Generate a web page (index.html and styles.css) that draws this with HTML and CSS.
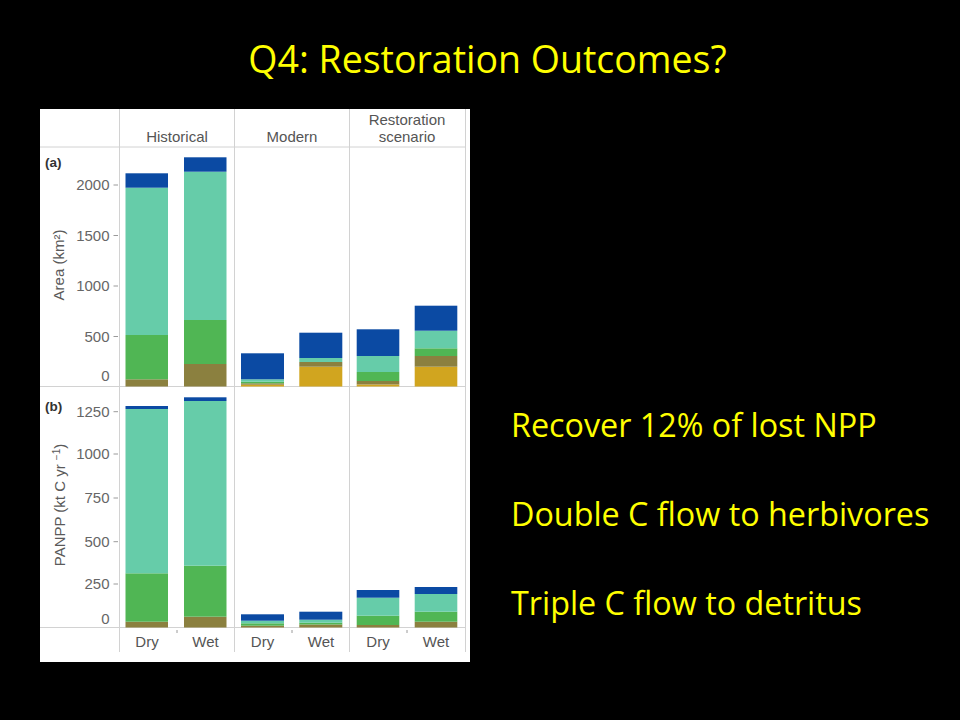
FILE: index.html
```html
<!DOCTYPE html>
<html lang="en">
<head>
<meta charset="utf-8">
<title>Q4: Restoration Outcomes?</title>
<link rel="stylesheet" href="styles.css">
</head>
<body>
<div class="slide">
  <h1 class="title">Q4: Restoration Outcomes?</h1>
  <div class="body">
    <figure class="chart">
      <svg width="430" height="553" viewBox="40 109 430 553" xmlns="http://www.w3.org/2000/svg">
        <rect x="40" y="109" width="430" height="553" fill="#ffffff"/>
        <!-- grid lines -->
        <g class="grid">
          <line x1="40" y1="147" x2="465" y2="147"/>
          <line x1="40" y1="386.5" x2="465" y2="386.5"/>
          <line x1="40" y1="627.5" x2="465" y2="627.5"/>
          <line x1="119.5" y1="109" x2="119.5" y2="652"/>
          <line x1="234.5" y1="109" x2="234.5" y2="652"/>
          <line x1="349.5" y1="109" x2="349.5" y2="652"/>
          <line x1="465.5" y1="109" x2="465.5" y2="652"/>
        </g>
        <!-- headers -->
        <g class="hdr">
          <text x="177" y="142.3">Historical</text>
          <text x="292" y="142.3">Modern</text>
          <text x="407" y="125">Restoration</text>
          <text x="407" y="142.3">scenario</text>
        </g>
        <!-- panel labels -->
        <text class="plabel" x="45" y="167">(a)</text>
        <text class="plabel" x="45" y="410.5">(b)</text>
        <!-- axis titles -->
        <text class="ytitle" transform="translate(63.5,265) rotate(-90)">Area (km²)</text>
        <text class="ytitle" transform="translate(64.5,505) rotate(-90)">PANPP (kt C yr <tspan class="sup" dy="-5">−1</tspan><tspan dy="5">)</tspan></text>
        <!-- ticks -->
        <g class="tick">
          <line x1="113.5" y1="185" x2="118" y2="185"/>
          <line x1="113.5" y1="235.5" x2="118" y2="235.5"/>
          <line x1="113.5" y1="286" x2="118" y2="286"/>
          <line x1="113.5" y1="336.5" x2="118" y2="336.5"/>
          <line x1="113.5" y1="411.7" x2="118" y2="411.7"/>
          <line x1="113.5" y1="454" x2="118" y2="454"/>
          <line x1="113.5" y1="498" x2="118" y2="498"/>
          <line x1="113.5" y1="541.7" x2="118" y2="541.7"/>
          <line x1="113.5" y1="584" x2="118" y2="584"/>
          <line x1="177" y1="630" x2="177" y2="633"/>
          <line x1="292" y1="630" x2="292" y2="633"/>
          <line x1="407" y1="630" x2="407" y2="633"/>
        </g>
        <g class="tlabel">
          <text x="109.5" y="190">2000</text>
          <text x="109.5" y="240.5">1500</text>
          <text x="109.5" y="291">1000</text>
          <text x="109.5" y="341.5">500</text>
          <text x="109.5" y="381">0</text>
          <text x="109.5" y="416.7">1250</text>
          <text x="109.5" y="459">1000</text>
          <text x="109.5" y="503">750</text>
          <text x="109.5" y="546.7">500</text>
          <text x="109.5" y="589">250</text>
          <text x="109.5" y="624.3">0</text>
        </g>
        <!-- panel a bars -->
        <g class="bars">
          <!-- Historical Dry -->
          <rect class="c-olive" x="125.5" y="379.3" width="42.5" height="7.2"/>
          <rect class="c-green" x="125.5" y="335" width="42.5" height="44.3"/>
          <rect class="c-teal" x="125.5" y="187.7" width="42.5" height="147.3"/>
          <rect class="c-blue" x="125.5" y="173.3" width="42.5" height="14.4"/>
          <!-- Historical Wet -->
          <rect class="c-olive" x="184" y="364" width="42.5" height="22.5"/>
          <rect class="c-green" x="184" y="320" width="42.5" height="44"/>
          <rect class="c-teal" x="184" y="171.7" width="42.5" height="148.3"/>
          <rect class="c-blue" x="184" y="157.3" width="42.5" height="14.4"/>
          <!-- Modern Dry -->
          <rect class="c-gold" x="241" y="384.7" width="43" height="1.8"/>
          <rect class="c-olive" x="241" y="383.3" width="43" height="1.4"/>
          <rect class="c-green" x="241" y="381.7" width="43" height="1.6"/>
          <rect class="c-teal" x="241" y="379.3" width="43" height="2.4"/>
          <rect class="c-blue" x="241" y="353.3" width="43" height="26"/>
          <!-- Modern Wet -->
          <rect class="c-gold" x="299.3" y="366.7" width="43" height="19.8"/>
          <rect class="c-olive" x="299.3" y="362" width="43" height="4.7"/>
          <rect class="c-teal" x="299.3" y="358" width="43" height="4"/>
          <rect class="c-blue" x="299.3" y="332.7" width="43" height="25.3"/>
          <!-- Restoration Dry -->
          <rect class="c-gold" x="356.7" y="384.5" width="42.6" height="2"/>
          <rect class="c-olive" x="356.7" y="381" width="42.6" height="3.5"/>
          <rect class="c-green" x="356.7" y="372" width="42.6" height="9"/>
          <rect class="c-teal" x="356.7" y="356" width="42.6" height="16"/>
          <rect class="c-blue" x="356.7" y="329.3" width="42.6" height="26.7"/>
          <!-- Restoration Wet -->
          <rect class="c-gold" x="414.7" y="366.7" width="42.6" height="19.8"/>
          <rect class="c-olive" x="414.7" y="356" width="42.6" height="10.7"/>
          <rect class="c-green" x="414.7" y="348.3" width="42.6" height="7.7"/>
          <rect class="c-teal" x="414.7" y="330.7" width="42.6" height="17.6"/>
          <rect class="c-blue" x="414.7" y="305.7" width="42.6" height="25"/>
        </g>
        <!-- panel b bars -->
        <g class="bars">
          <!-- Historical Dry -->
          <rect class="c-olive" x="125.5" y="621.7" width="42.5" height="5.8"/>
          <rect class="c-green" x="125.5" y="573.3" width="42.5" height="48.4"/>
          <rect class="c-teal" x="125.5" y="409" width="42.5" height="164.3"/>
          <rect class="c-blue" x="125.5" y="406" width="42.5" height="3"/>
          <!-- Historical Wet -->
          <rect class="c-olive" x="184" y="616.7" width="42.5" height="10.8"/>
          <rect class="c-green" x="184" y="565.7" width="42.5" height="51"/>
          <rect class="c-teal" x="184" y="401" width="42.5" height="164.7"/>
          <rect class="c-blue" x="184" y="397.3" width="42.5" height="3.7"/>
          <!-- Modern Dry -->
          <rect class="c-olive" x="241" y="625.7" width="43" height="1.8"/>
          <rect class="c-green" x="241" y="623.3" width="43" height="2.4"/>
          <rect class="c-teal" x="241" y="620.7" width="43" height="2.6"/>
          <rect class="c-blue" x="241" y="614.3" width="43" height="6.4"/>
          <!-- Modern Wet -->
          <rect class="c-olive" x="299.3" y="624.5" width="43" height="3"/>
          <rect class="c-green" x="299.3" y="622.7" width="43" height="1.8"/>
          <rect class="c-teal" x="299.3" y="619.7" width="43" height="3"/>
          <rect class="c-blue" x="299.3" y="611.7" width="43" height="8"/>
          <!-- Restoration Dry -->
          <rect class="c-olive" x="356.7" y="625" width="42.6" height="2.5"/>
          <rect class="c-green" x="356.7" y="615.7" width="42.6" height="9.3"/>
          <rect class="c-teal" x="356.7" y="597.7" width="42.6" height="18"/>
          <rect class="c-blue" x="356.7" y="590" width="42.6" height="7.7"/>
          <!-- Restoration Wet -->
          <rect class="c-olive" x="414.7" y="621.7" width="42.6" height="5.8"/>
          <rect class="c-green" x="414.7" y="611.7" width="42.6" height="10"/>
          <rect class="c-teal" x="414.7" y="594" width="42.6" height="17.7"/>
          <rect class="c-blue" x="414.7" y="587" width="42.6" height="7"/>
        </g>
        <!-- x labels -->
        <g class="xlabel">
          <text x="147" y="647">Dry</text>
          <text x="205.5" y="647">Wet</text>
          <text x="262.5" y="647">Dry</text>
          <text x="321" y="647">Wet</text>
          <text x="378" y="647">Dry</text>
          <text x="436" y="647">Wet</text>
        </g>
      </svg>
    </figure>
    <div class="points">
      <p>Recover 12% of lost NPP</p>
      <p>Double C flow to herbivores</p>
      <p>Triple C flow to detritus</p>
    </div>
  </div>
</div>
</body>
</html>
```
FILE: styles.css
```css
html, body {
  margin: 0;
  padding: 0;
  background: #000000;
}

.slide {
  width: 960px;
  height: 720px;
  overflow: hidden;
  background: #000000;
}

.title {
  margin: 0;
  height: 109px;
  box-sizing: border-box;
  padding: 33.5px 0 0 15px;
  text-align: center;
  font-family: "Open Sans", "Liberation Sans", sans-serif;
  font-weight: 400;
  font-size: 37.5px;
  line-height: 50px;
  color: #ffff00;
}

.body {
  display: flex;
  align-items: flex-start;
  padding-left: 40px;
}

.chart {
  margin: 0;
  width: 430px;
  height: 553px;
  background: #ffffff;
}

.chart svg {
  display: block;
}

.grid line {
  stroke: #d2d2d2;
  stroke-width: 1;
}

.tick line {
  stroke: #9a9a9a;
  stroke-width: 1;
}

.hdr text {
  font-family: "Liberation Sans", Arial, sans-serif;
  font-size: 15px;
  fill: #555555;
  text-anchor: middle;
}

.plabel {
  font-family: "Liberation Sans", Arial, sans-serif;
  font-size: 13.5px;
  font-weight: bold;
  fill: #333333;
}

.ytitle {
  font-family: "Liberation Sans", Arial, sans-serif;
  font-size: 15px;
  fill: #5a5a5a;
  text-anchor: middle;
}

.ytitle .sup {
  font-size: 10px;
}

.tlabel text {
  font-family: "Liberation Sans", Arial, sans-serif;
  font-size: 15px;
  fill: #666666;
  text-anchor: end;
}

.xlabel text {
  font-family: "Liberation Sans", Arial, sans-serif;
  font-size: 15px;
  fill: #555555;
  text-anchor: middle;
}

.c-blue { fill: #0b4aa3; }
.c-teal { fill: #66cca9; }
.c-green { fill: #50b654; }
.c-olive { fill: #8b803f; }
.c-gold { fill: #d1a51f; }

.points {
  margin-left: 41px;
  padding-top: 294.5px;
  display: flex;
  flex-direction: column;
  gap: 49px;
  font-family: "Open Sans", "Liberation Sans", sans-serif;
  font-size: 32.3px;
  color: #ffff00;
}

.points p {
  margin: 0;
  line-height: 40px;
  white-space: nowrap;
}
```
